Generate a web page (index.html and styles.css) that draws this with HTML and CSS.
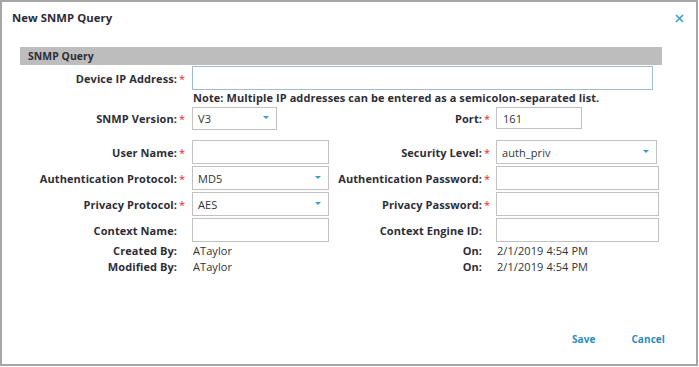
FILE: index.html
```html
<!DOCTYPE html>
<html lang="en">
<head>
    <meta charset="UTF-8">
    <title>New SNMP Query</title>
    <link rel="stylesheet" href="styles.css">
</head>
<body>
    <div class="dialog">
        <!-- Title -->
        <div class="dialog-header">
            <span class="dialog-title">New SNMP Query</span>
            <button class="close-btn" title="Close">
                <svg width="9" height="9" viewBox="0 0 9 9">
                    <path d="M1 1 L8 8 M8 1 L1 8" stroke="#3a9cc7" stroke-width="1.6" fill="none"/>
                </svg>
            </button>
        </div>

        <div class="section-bar">SNMP Query</div>

        <div class="form">
            <!-- Device IP -->
            <div class="row row-ip">
                <label class="label">Device IP Address:</label>
                <span class="req">*</span>
                <input type="text" class="field field-wide field-focus">
            </div>
            <div class="row row-note">
                <span class="note">Note: Multiple IP addresses can be entered as a semicolon-separated list.</span>
            </div>

            <!-- Version / Port -->
            <div class="row row-version">
                <label class="label">SNMP Version:</label>
                <span class="req">*</span>
                <div class="select select-version"><span>V3</span><span class="caret"></span></div>
                <label class="label">Port:</label>
                <span class="req">*</span>
                <input type="text" class="field field-port" value="161">
            </div>

            <!-- Credentials -->
            <div class="row row-first">
                <label class="label">User Name:</label>
                <span class="req">*</span>
                <input type="text" class="field">
                <label class="label">Security Level:</label>
                <span class="req">*</span>
                <div class="select select-right"><span>auth_priv</span><span class="caret"></span></div>
            </div>
            <div class="row">
                <label class="label">Authentication Protocol:</label>
                <span class="req">*</span>
                <div class="select"><span>MD5</span><span class="caret"></span></div>
                <label class="label">Authentication Password:</label>
                <span class="req">*</span>
                <input type="text" class="field field-right">
            </div>
            <div class="row">
                <label class="label">Privacy Protocol:</label>
                <span class="req">*</span>
                <div class="select"><span>AES</span><span class="caret"></span></div>
                <label class="label">Privacy Password:</label>
                <span class="req">*</span>
                <input type="text" class="field field-right">
            </div>
            <div class="row">
                <label class="label">Context Name:</label>
                <span class="req"></span>
                <input type="text" class="field">
                <label class="label">Context Engine ID:</label>
                <span class="req"></span>
                <input type="text" class="field field-right">
            </div>

            <!-- Audit info -->
            <div class="row row-info row-info-first">
                <span class="label">Created By:</span>
                <span class="req"></span>
                <span class="value">ATaylor</span>
                <span class="label">On:</span>
                <span class="req"></span>
                <span class="value">2/1/2019 4:54 PM</span>
            </div>
            <div class="row row-info">
                <span class="label">Modified By:</span>
                <span class="req"></span>
                <span class="value">ATaylor</span>
                <span class="label">On:</span>
                <span class="req"></span>
                <span class="value">2/1/2019 4:54 PM</span>
            </div>
        </div>

        <!-- Footer -->
        <div class="dialog-footer">
            <a href="#" class="action">Save</a>
            <a href="#" class="action">Cancel</a>
        </div>
    </div>
</body>
</html>
```

FILE: styles.css
```css
/* General Styling */
body {
    margin: 0;
    padding: 0;
    font-family: "Open Sans", Arial, sans-serif;
    font-size: 11px;
    letter-spacing: 0.08px;
    color: #333;
    background-color: #ffffff;
}

/* Dialog */
.dialog {
    width: 698px;
    height: 366px;
    box-sizing: border-box;
    border: 2px solid #a6a6a6;
    background-color: #ffffff;
    display: flex;
    flex-direction: column;
}

.dialog-header {
    display: flex;
    justify-content: space-between;
    align-items: center;
    padding: 8px 12px 0 10px;
    height: 16px;
}

.dialog-title {
    font-size: 11.3px;
    font-weight: bold;
    line-height: 16px;
    color: #2b2b35;
}

.close-btn {
    background: transparent;
    border: none;
    padding: 0;
    width: 9px;
    height: 9px;
    display: flex;
    cursor: pointer;
}

/* Section Bar */
.section-bar {
    margin: 21px 34px 0 18px;
    height: 18px;
    line-height: 18px;
    padding-left: 8px;
    background-color: #bdbdbd;
    font-size: 10.4px;
    font-weight: bold;
    color: #2e2e38;
}

/* Form Rows */
.form {
    margin-left: 18px;
    padding-top: 1px;
}

.row {
    display: grid;
    grid-template-columns: 157px 15px 137px 153px 14px 162px;
    align-items: center;
    height: 24px;
    margin-bottom: 2px;
}

.label {
    text-align: right;
    font-weight: bold;
    color: #2e2e38;
    white-space: nowrap;
}

.req {
    color: #e3262e;
    padding-left: 2px;
    align-self: center;
}

.row-ip {
    margin-bottom: 0;
}

.row-note {
    height: 16px;
    line-height: 16px;
    margin-bottom: 1px;
}

.note {
    grid-column: 3 / 7;
    padding-left: 1px;
    font-weight: bold;
    color: #2e2e38;
    white-space: nowrap;
}

.row-version {
    height: 23px;
    margin-bottom: 10px;
}

/* Inputs */
.field {
    font-family: inherit;
    font-size: 11px;
    letter-spacing: 0.08px;
    color: #333;
    height: 24px;
    width: 137px;
    box-sizing: border-box;
    border: 1px solid #c2c2c2;
    padding: 0 6px;
    margin: 0;
    outline: none;
}

.field-wide {
    grid-column: 3 / 7;
    width: 461px;
}

.field-focus {
    border-color: #a3bdd0;
}

.field-port {
    width: 86px;
    height: 22px;
    align-self: start;
}

.field-right {
    width: 163px;
}

/* Fake Select */
.select {
    height: 24px;
    width: 137px;
    box-sizing: border-box;
    border: 1px solid #c2c2c2;
    display: flex;
    justify-content: space-between;
    align-items: center;
    padding: 0 7px 0 5px;
}

.select-version {
    width: 85px;
    height: 23px;
}

.select-right {
    width: 161px;
}

.caret {
    width: 0;
    height: 0;
    border-left: 3px solid transparent;
    border-right: 3px solid transparent;
    border-top: 3px solid #3a9cc7;
    margin-bottom: 2px;
}

/* Audit Info */
.row-info {
    height: 16px;
    line-height: 16px;
    margin-bottom: 0;
}

.row-info-first {
    margin-top: -1px;
}

.value {
    padding-left: 1px;
    white-space: nowrap;
    color: #333;
}

/* Footer */
.dialog-footer {
    margin-top: auto;
    display: flex;
    justify-content: flex-end;
    gap: 36px;
    padding: 0 31px 17px 0;
    line-height: 16px;
    font-size: 10px;
}

.action {
    font-weight: bold;
    color: #2a8cbf;
    text-decoration: none;
}
```
